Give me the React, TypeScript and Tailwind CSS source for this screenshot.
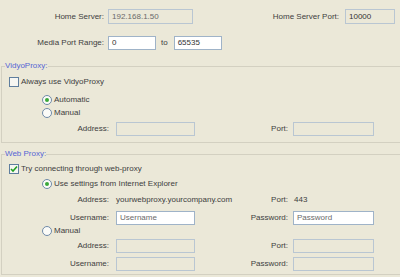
import React from 'react'

const font = { fontFamily: '"Liberation Sans", Arial, sans-serif' }

function Field({ value, enabled, muted, className }: { value?: string; enabled?: boolean; muted?: boolean; className: string }) {
  return (
    <div
      className={
        'h-[14px] border flex items-center px-[3px] leading-none ' +
        (enabled ? 'bg-white border-[#9fb3c8] ' : 'bg-[#ebe8d8] border-[#b9c6d2] ') +
        (muted ? 'text-[#6a6a6a] ' : 'text-[#333] ') +
        className
      }
    >
      {value}
    </div>
  )
}

function Check({ checked }: { checked?: boolean }) {
  return (
    <span className="w-[10px] h-[10px] border border-[#5f7e9e] bg-[#f6f6f2] flex items-center justify-center shrink-0">
      {checked && (
        <svg width="8" height="8" viewBox="0 0 8 8">
          <path d="M1 4 L3 6 L7 1.5" fill="none" stroke="#22a022" strokeWidth="1.6" />
        </svg>
      )}
    </span>
  )
}

function Radio({ on }: { on?: boolean }) {
  return (
    <span className="w-[10px] h-[10px] rounded-full border border-[#6f8aa8] bg-[#fbfbf8] flex items-center justify-center shrink-0">
      {on && <span className="w-[4px] h-[4px] rounded-full bg-[#3aa83a]" />}
    </span>
  )
}

function Label({ children, className }: { children: React.ReactNode; className: string }) {
  return <span className={'text-right whitespace-nowrap ' + className}>{children}</span>
}

export default function App() {
  return (
    <div style={font} className="w-[400px] h-[277px] overflow-hidden bg-[#ebe8d8] text-[8px] text-[#404040] flex flex-col">
      {/* server row */}
      <div className="mt-[9px] h-[15px] flex items-center">
        <Label className="w-[104px]">Home Server:</Label>
        <Field className="ml-[4px] w-[85px] h-[15px]" value="192.168.1.50" muted />
        <Label className="w-[146px]">Home Server Port:</Label>
        <Field className="ml-[6px] w-[50px] h-[15px]" value="10000" />
      </div>
      <div className="mt-[12px] h-[14px] flex items-center">
        <Label className="w-[104px]">Media Port Range:</Label>
        <Field className="ml-[4px] w-[48px]" value="0" enabled />
        <span className="ml-[5px]">to</span>
        <Field className="ml-[6px] w-[48px]" value="65535" enabled />
      </div>

      {/* VidyoProxy group */}
      <fieldset className="mt-[11px] ml-[1px] border border-r-0 border-[#d3d0c1] pb-[6px] flex flex-col">
        <legend className="ml-[3px] leading-[10px] text-[#5566d4]">VidyoProxy:</legend>
        <div className="mt-[5px] h-[12px] flex items-center ml-[7px] gap-[2px]">
          <Check />
          <span>Always use VidyoProxy</span>
        </div>
        <div className="mt-[6px] h-[12px] flex items-center ml-[40px] gap-[2px]">
          <Radio on />
          <span>Automatic</span>
        </div>
        <div className="mt-[1px] h-[12px] flex items-center ml-[40px] gap-[2px]">
          <Radio />
          <span>Manual</span>
        </div>
        <div className="mt-[3px] h-[14px] flex items-center">
          <Label className="w-[107px]">Address:</Label>
          <Field className="ml-[7px] w-[79px]" />
          <Label className="w-[93px]">Port:</Label>
          <Field className="ml-[5px] w-[81px]" />
        </div>
      </fieldset>

      {/* Web Proxy group */}
      <fieldset className="mt-[6px] ml-[1px] border border-r-0 border-[#d3d0c1] pb-[3px] flex flex-col">
        <legend className="ml-[3px] leading-[10px] text-[#5566d4]">Web Proxy:</legend>
        <div className="mt-[4px] h-[12px] flex items-center ml-[7px] gap-[2px]">
          <Check checked />
          <span>Try connecting through web-proxy</span>
        </div>
        <div className="mt-[3px] h-[12px] flex items-center ml-[40px] gap-[2px]">
          <Radio on />
          <span>Use settings from Internet Explorer</span>
        </div>
        <div className="mt-[4px] h-[12px] flex items-center">
          <Label className="w-[107px]">Address:</Label>
          <span className="ml-[7px] w-[79px] whitespace-nowrap">yourwebproxy.yourcompany.com</span>
          <Label className="w-[93px]">Port:</Label>
          <span className="ml-[6px]">443</span>
        </div>
        <div className="mt-[5px] h-[14px] flex items-center">
          <Label className="w-[107px]">Username:</Label>
          <Field className="ml-[7px] w-[79px]" value="Username" enabled muted />
          <Label className="w-[93px]">Password:</Label>
          <Field className="ml-[5px] w-[81px]" value="Password" enabled muted />
        </div>
        <div className="mt-[1px] h-[10px] flex items-center ml-[40px] gap-[2px]">
          <Radio />
          <span>Manual</span>
        </div>
        <div className="mt-[3px] h-[14px] flex items-center">
          <Label className="w-[107px]">Address:</Label>
          <Field className="ml-[7px] w-[79px]" />
          <Label className="w-[93px]">Port:</Label>
          <Field className="ml-[5px] w-[81px]" />
        </div>
        <div className="mt-[4px] h-[14px] flex items-center">
          <Label className="w-[107px]">Username:</Label>
          <Field className="ml-[7px] w-[79px]" />
          <Label className="w-[93px]">Password:</Label>
          <Field className="ml-[5px] w-[81px]" />
        </div>
      </fieldset>
    </div>
  )
}
